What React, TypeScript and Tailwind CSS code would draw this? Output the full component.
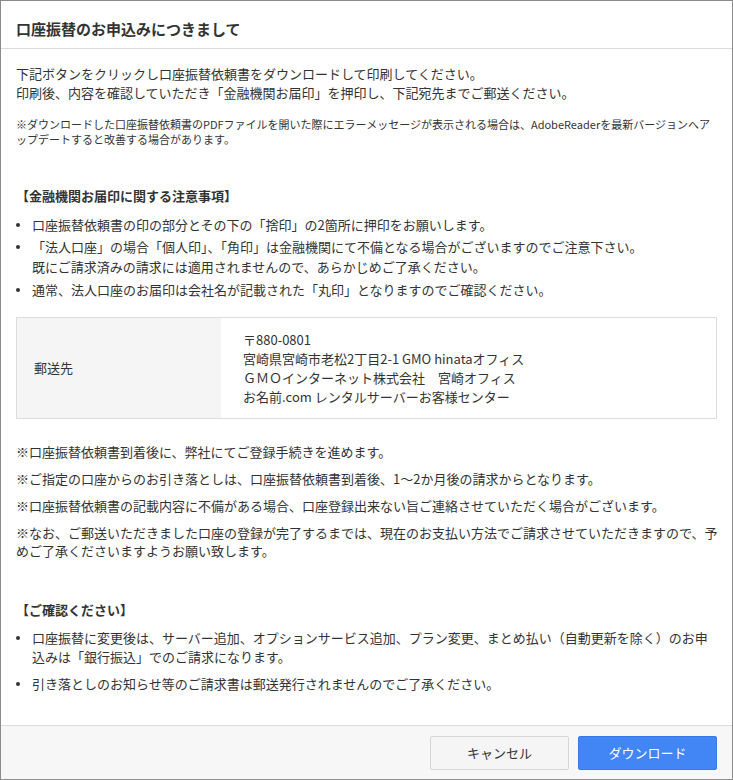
export default function App() {
  return (
    <div
      className="w-[733px] h-[780px] flex flex-col bg-white border border-[#8c8c8c] text-[#333]"
      style={{ fontFamily: '"Noto Sans CJK JP", "Noto Sans", sans-serif' }}
    >
      <div className="h-[48px] shrink-0 flex items-center pt-[8px] pl-[15px] border-b border-[#dcdcdc]">
        <h1 className="text-[15px] font-bold leading-[20px]">口座振替のお申込みにつきまして</h1>
      </div>

      <div className="flex-1 pl-[15px] pr-[14px]">
        <p className="mt-[15px] text-[13px] leading-[19px]">
          下記ボタンをクリックし口座振替依頼書をダウンロードして印刷してください。
          <br />
          印刷後、内容を確認していただき「金融機関お届印」を押印し、下記宛先までご郵送ください。
        </p>
        <p className="mt-[15px] text-[11px] leading-[15px]">
          ※ダウンロードした口座振替依頼書のPDFファイルを開いた際にエラーメッセージが表示される場合は、AdobeReaderを最新バージョンへア
          <br />
          ップデートすると改善する場合があります。
        </p>

        <h2 className="mt-[39px] text-[13px] leading-[19px] font-bold">【金融機関お届印に関する注意事項】</h2>
        <ul className="mt-[10px] text-[13px] leading-[20px]">
          <li className="flex">
            <span className="w-[16px] shrink-0 flex pt-[8px]">
              <span className="w-[4px] h-[4px] rounded-full bg-[#333]" />
            </span>
            <span>口座振替依頼書の印の部分とその下の「捨印」の2箇所に押印をお願いします。</span>
          </li>
          <li className="flex mt-[2px]">
            <span className="w-[16px] shrink-0 flex pt-[8px]">
              <span className="w-[4px] h-[4px] rounded-full bg-[#333]" />
            </span>
            <span>
              「法人口座」の場合「個人印」、「角印」は金融機関にて不備となる場合がございますのでご注意下さい。
              <br />
              既にご請求済みの請求には適用されませんので、あらかじめご了承ください。
            </span>
          </li>
          <li className="flex mt-[3px]">
            <span className="w-[16px] shrink-0 flex pt-[8px]">
              <span className="w-[4px] h-[4px] rounded-full bg-[#333]" />
            </span>
            <span>通常、法人口座のお届印は会社名が記載された「丸印」となりますのでご確認ください。</span>
          </li>
        </ul>

        <div className="mt-[17px] mr-[1px] flex border border-[#dcdcdc] text-[13px]">
          <div className="w-[204px] shrink-0 flex items-center pl-[17px] bg-[#f5f5f5]">郵送先</div>
          <div className="pl-[22px] py-[12px] leading-[19px]">
            〒880-0801
            <br />
            宮崎県宮崎市老松2丁目2-1 GMO hinataオフィス
            <br />
            ＧＭＯインターネット株式会社　宮崎オフィス
            <br />
            お名前.com レンタルサーバーお客様センター
          </div>
        </div>

        <div className="mt-[24px] text-[13px] leading-[18px]">
          <p>※口座振替依頼書到着後に、弊社にてご登録手続きを進めます。</p>
          <p className="mt-[9px]">
            ※ご指定の口座からのお引き落としは、口座振替依頼書到着後、1～2か月後の請求からとなります。
          </p>
          <p className="mt-[9px]">
            ※口座振替依頼書の記載内容に不備がある場合、口座登録出来ない旨ご連絡させていただく場合がございます。
          </p>
          <p className="mt-[9px]">
            ※なお、ご郵送いただきました口座の登録が完了するまでは、現在のお支払い方法でご請求させていただきますので、予めご了承くださいますようお願い致します。
          </p>
        </div>

        <h2 className="mt-[40px] text-[13px] leading-[19px] font-bold">【ご確認ください】</h2>
        <ul className="mt-[9px] text-[13px] leading-[19px]">
          <li className="flex">
            <span className="w-[16px] shrink-0 flex pt-[8px]">
              <span className="w-[4px] h-[4px] rounded-full bg-[#333]" />
            </span>
            <span>
              口座振替に変更後は、サーバー追加、オプションサービス追加、プラン変更、まとめ払い（自動更新を除く）のお申込みは「銀行振込」でのご請求になります。
            </span>
          </li>
          <li className="flex mt-[8px]">
            <span className="w-[16px] shrink-0 flex pt-[8px]">
              <span className="w-[4px] h-[4px] rounded-full bg-[#333]" />
            </span>
            <span>引き落としのお知らせ等のご請求書は郵送発行されませんのでご了承ください。</span>
          </li>
        </ul>
      </div>

      <div className="h-[54px] shrink-0 flex items-center justify-end gap-[9px] pr-[15px] bg-[#f7f7f7] border-t border-[#dcdcdc]">
        <button className="w-[139px] h-[34px] text-[13px] bg-[#f5f5f5] border border-[#d6d6d6] rounded-[2px] text-[#333]">
          キャンセル
        </button>
        <button className="w-[139px] h-[34px] text-[13px] bg-[#4285f4] border border-[#3b78e7] rounded-[2px] text-white">
          ダウンロード
        </button>
      </div>
    </div>
  );
}
